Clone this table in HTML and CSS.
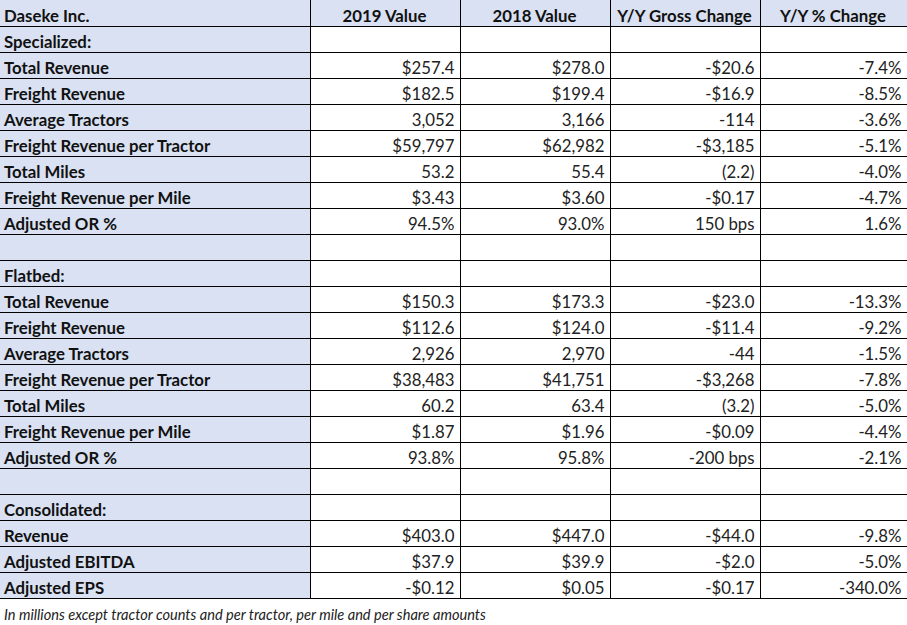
FILE: index.html
```
<!DOCTYPE html>
<html>
<head>
<meta charset="utf-8">
<link rel="stylesheet" href="styles.css">
</head>
<body>
<table class="fin">
<colgroup>
<col class="c-label"><col class="c-num"><col class="c-num"><col class="c-num"><col class="c-last">
</colgroup>
<thead>
<tr class="head"><th class="lbl">Daseke Inc.</th><th>2019 Value</th><th>2018 Value</th><th>Y/Y Gross Change</th><th>Y/Y % Change</th></tr>
</thead>
<tbody>
<tr><th class="lbl">Specialized:</th><td></td><td></td><td></td><td></td></tr>
<tr><th class="lbl">Total Revenue</th><td>$257.4</td><td>$278.0</td><td>-$20.6</td><td>-7.4%</td></tr>
<tr><th class="lbl">Freight Revenue</th><td>$182.5</td><td>$199.4</td><td>-$16.9</td><td>-8.5%</td></tr>
<tr><th class="lbl">Average Tractors</th><td>3,052</td><td>3,166</td><td>-114</td><td>-3.6%</td></tr>
<tr><th class="lbl">Freight Revenue per Tractor</th><td>$59,797</td><td>$62,982</td><td>-$3,185</td><td>-5.1%</td></tr>
<tr><th class="lbl">Total Miles</th><td>53.2</td><td>55.4</td><td>(2.2)</td><td>-4.0%</td></tr>
<tr><th class="lbl">Freight Revenue per Mile</th><td>$3.43</td><td>$3.60</td><td>-$0.17</td><td>-4.7%</td></tr>
<tr><th class="lbl">Adjusted OR %</th><td>94.5%</td><td>93.0%</td><td>150 bps</td><td>1.6%</td></tr>
<tr><th class="lbl"></th><td></td><td></td><td></td><td></td></tr>
<tr><th class="lbl">Flatbed:</th><td></td><td></td><td></td><td></td></tr>
<tr><th class="lbl">Total Revenue</th><td>$150.3</td><td>$173.3</td><td>-$23.0</td><td>-13.3%</td></tr>
<tr><th class="lbl">Freight Revenue</th><td>$112.6</td><td>$124.0</td><td>-$11.4</td><td>-9.2%</td></tr>
<tr><th class="lbl">Average Tractors</th><td>2,926</td><td>2,970</td><td>-44</td><td>-1.5%</td></tr>
<tr><th class="lbl">Freight Revenue per Tractor</th><td>$38,483</td><td>$41,751</td><td>-$3,268</td><td>-7.8%</td></tr>
<tr><th class="lbl">Total Miles</th><td>60.2</td><td>63.4</td><td>(3.2)</td><td>-5.0%</td></tr>
<tr><th class="lbl">Freight Revenue per Mile</th><td>$1.87</td><td>$1.96</td><td>-$0.09</td><td>-4.4%</td></tr>
<tr><th class="lbl">Adjusted OR %</th><td>93.8%</td><td>95.8%</td><td>-200 bps</td><td>-2.1%</td></tr>
<tr><th class="lbl"></th><td></td><td></td><td></td><td></td></tr>
<tr><th class="lbl">Consolidated:</th><td></td><td></td><td></td><td></td></tr>
<tr><th class="lbl">Revenue</th><td>$403.0</td><td>$447.0</td><td>-$44.0</td><td>-9.8%</td></tr>
<tr><th class="lbl">Adjusted EBITDA</th><td>$37.9</td><td>$39.9</td><td>-$2.0</td><td>-5.0%</td></tr>
<tr><th class="lbl">Adjusted EPS</th><td>-$0.12</td><td>$0.05</td><td>-$0.17</td><td>-340.0%</td></tr>
</tbody>
</table>
<p class="note">In millions except tractor counts and per tractor, per mile and per share amounts</p>
</body>
</html>
```
FILE: styles.css
```
html, body {
  margin: 0;
  padding: 0;
  background: #ffffff;
}
body {
  font-family: Lato, "Liberation Sans", sans-serif;
  color: #1a1a1a;
}
.fin {
  border-collapse: collapse;
  table-layout: fixed;
  width: 907px;
  font-size: 16.8px;
}
.c-label { width: 310px; }
.c-num { width: 150px; }
.c-last { width: 147px; }
.fin th, .fin td {
  height: 26px;
  padding: 0 5px 1px 4px;
  border: 1px solid #000;
  box-sizing: border-box;
  line-height: 19px;
  vertical-align: bottom;
  white-space: nowrap;
  overflow: hidden;
}
.fin tr > :first-child { border-left: none; }
.fin thead th { border-top: none; }
.fin td {
  text-align: right;
  font-weight: 400;
  color: #222;
}
.fin .lbl {
  text-align: left;
  font-weight: 700;
  background: #d9e1f2;
  color: #111;
}
.head th {
  background: #d9e1f2;
  font-weight: 700;
  text-align: center;
  color: #111;
}
.head th.lbl { text-align: left; }
.note {
  margin: 0;
  padding: 7px 0 0 4px;
  font-size: 14.6px;
  font-style: italic;
  color: #222;
}
```
